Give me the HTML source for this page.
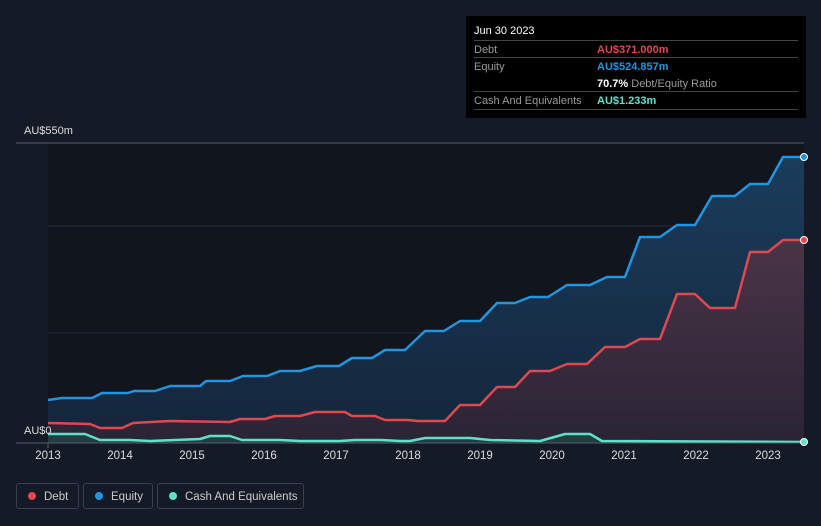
<!DOCTYPE html>
<html><head><meta charset="utf-8"><style>
body{margin:0;width:821px;height:526px;background:#151b26;font-family:"Liberation Sans",sans-serif;overflow:hidden;position:relative}
.tt{position:absolute;left:466px;top:16px;width:340px;height:102px;background:#000;color:#fff;font-size:11px}
.tt .r{position:absolute;left:8px;width:324px;border-top:1px solid #444}
.lab{color:#999;position:absolute;left:0}
.val{position:absolute;left:123px;font-weight:bold}
.leg{position:absolute;top:483px;height:26px;border:1px solid #3a404c;border-radius:3px;color:#ccc;font-size:11.5px;line-height:26px;box-sizing:border-box}
.dot{display:inline-block;width:8px;height:8px;border-radius:50%;margin:0 8px 0 11px;vertical-align:-0px}
.yr{position:absolute;top:450px;color:#ddd;font-size:11.5px;width:40px;text-align:center}
</style></head><body>
<svg width="821" height="526" style="position:absolute;left:0;top:0">
<defs>
<linearGradient id="ge" x1="0" y1="0" x2="0" y2="1"><stop offset="0" stop-color="#1a3d5c"/><stop offset="1" stop-color="#14253a"/></linearGradient>
<linearGradient id="gd" x1="0" y1="0" x2="0" y2="1"><stop offset="0" stop-color="#4a3448"/><stop offset="1" stop-color="#2a2434"/></linearGradient>
</defs>
<rect x="48" y="143" width="756" height="300" fill="#10151e"/>
<line x1="16" y1="143" x2="804" y2="143" stroke="#555c66" stroke-width="1"/>
<line x1="48" y1="226" x2="804" y2="226" stroke="#262c36"/>
<line x1="48" y1="333" x2="804" y2="333" stroke="#262c36"/>
<polygon fill="url(#ge)" points="48,400 62,398 92,398 102,393 128,393 134,391 155,391 170,386 200,386 206,381 230,381 243,376 267,376 280,371 300,371 317,366 339,366 352,358 372,358 385,350 405,350 425,331 444,331 460,321 480,321 497,303 515,303 530,297 548,297 567,285 590,285 607,277 625,277 640,237 660,237 677,225 695,225 712,196 735,196 750,184 768,184 783,157 804,157 804,443 48,443"/>
<polygon fill="url(#gd)" points="48,423 90,424 100,428 122,428 133,423 170,421 230,422 240,419 265,419 275,416 300,416 315,412 345,412 352,416 375,416 385,420 408,420 418,421 445,421 460,405 480,405 497,387 515,387 530,371 550,371 567,364 587,364 605,347 625,347 640,339 660,339 677,294 695,294 710,308 735,308 750,252 768,252 783,240 804,240 804,443 48,443"/>
<polygon fill="#1f4a4a" opacity="0.7" points="48,434 85,434 100,440 130,440 150,441 200,439 210,436 230,436 242,440 280,440 300,441 340,441 355,440 380,440 400,441 410,441 425,438 470,438 490,440 540,441 565,434 590,434 602,441 804,442 804,443 48,443"/>
<g fill="none" stroke-width="2.5" stroke-linejoin="round">
<polyline stroke="#2394df" points="48,400 62,398 92,398 102,393 128,393 134,391 155,391 170,386 200,386 206,381 230,381 243,376 267,376 280,371 300,371 317,366 339,366 352,358 372,358 385,350 405,350 425,331 444,331 460,321 480,321 497,303 515,303 530,297 548,297 567,285 590,285 607,277 625,277 640,237 660,237 677,225 695,225 712,196 735,196 750,184 768,184 783,157 804,157"/>
<polyline stroke="#e0474f" points="48,423 90,424 100,428 122,428 133,423 170,421 230,422 240,419 265,419 275,416 300,416 315,412 345,412 352,416 375,416 385,420 408,420 418,421 445,421 460,405 480,405 497,387 515,387 530,371 550,371 567,364 587,364 605,347 625,347 640,339 660,339 677,294 695,294 710,308 735,308 750,252 768,252 783,240 804,240"/>
<polyline stroke="#5fe0c9" points="48,434 85,434 100,440 130,440 150,441 200,439 210,436 230,436 242,440 280,440 300,441 340,441 355,440 380,440 400,441 410,441 425,438 470,438 490,440 540,441 565,434 590,434 602,441 804,442"/>
</g>
<line x1="16" y1="443" x2="804" y2="443" stroke="#555c66"/>
<line x1="48" y1="443" x2="48" y2="448" stroke="#555c66"/>
<circle cx="804" cy="157" r="3.5" fill="#2394df" stroke="#fff" stroke-width="1"/>
<circle cx="804" cy="240" r="3.5" fill="#e0474f" stroke="#fff" stroke-width="1"/>
<circle cx="804" cy="442" r="3.5" fill="#5fe0c9" stroke="#fff" stroke-width="1"/>
</svg>
<div style="position:absolute;left:24px;top:125px;color:#ddd;font-size:11px">AU$550m</div>
<div style="position:absolute;left:24px;top:425px;color:#ddd;font-size:11px">AU$0</div>
<div class="yr" style="left:28px">2013</div><div class="yr" style="left:100px">2014</div><div class="yr" style="left:172px">2015</div><div class="yr" style="left:244px">2016</div><div class="yr" style="left:316px">2017</div><div class="yr" style="left:388px">2018</div><div class="yr" style="left:460px">2019</div><div class="yr" style="left:532px">2020</div><div class="yr" style="left:604px">2021</div><div class="yr" style="left:676px">2022</div><div class="yr" style="left:748px">2023</div>
<div class="tt">
<div style="position:absolute;left:8px;top:9px">Jun 30 2023</div>
<div class="r" style="top:24px;height:16px"><span class="lab" style="top:3px">Debt</span><span class="val" style="top:3px;color:#e0474f">AU$371.000m</span></div>
<div class="r" style="top:41px;height:33px"><span class="lab" style="top:3px">Equity</span><span class="val" style="top:3px;color:#2394df">AU$524.857m</span><span class="val" style="top:20px;color:#fff">70.7% <span style="color:#999;font-weight:normal">Debt/Equity Ratio</span></span></div>
<div class="r" style="top:75px;height:17px;border-bottom:1px solid #444"><span class="lab" style="top:3px">Cash And Equivalents</span><span class="val" style="top:3px;color:#5fe0c9">AU$1.233m</span></div>
</div>
<div class="leg" style="left:16px;width:63px"><span class="dot" style="background:#e0474f"></span>Debt</div>
<div class="leg" style="left:83px;width:70px"><span class="dot" style="background:#2394df"></span>Equity</div>
<div class="leg" style="left:157px;width:147px"><span class="dot" style="background:#5fe0c9"></span>Cash And Equivalents</div>
</body></html>
